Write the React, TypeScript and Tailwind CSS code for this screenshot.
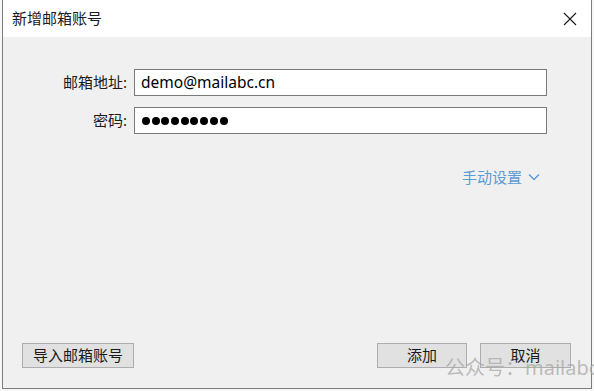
const FONT = { fontFamily: '"Noto Sans", "Noto Sans CJK SC", sans-serif' };

function PasswordDots({ count }: { count: number }) {
  return (
    <div className="ml-[1px] flex items-center gap-[1.7px]">
      {Array.from({ length: count }).map((_, i) => (
        <span key={i} className="block h-[8px] w-[8px] rounded-full bg-black" />
      ))}
    </div>
  );
}

function Field({ label, children }: { label: string; children: React.ReactNode }) {
  return (
    <div className="flex items-center">
      <div className="w-[125px] pr-[1px] text-right text-[15px] text-[#1a1a1a]">{label}</div>
      <div className="ml-[6px] flex h-[27px] w-[413px] items-center border border-[#7a7a7a] bg-white pl-[6px]">
        {children}
      </div>
    </div>
  );
}

export default function App() {
  return (
    <main className="relative h-[391px] w-[594px] overflow-hidden bg-[#f7f7f7]" style={FONT}>
      <div className="ml-[2px] flex h-[389px] w-[590px] flex-col border-x border-b border-[#7d7d7d] bg-[#f0f0f0]">
        <div className="flex h-[37px] items-center justify-between bg-white pl-[9px] pr-[14px]">
          <span className="text-[15px] text-[#1a1a1a]">新增邮箱账号</span>
          <svg width="14" height="14" viewBox="0 0 14 14" className="mt-[1px]">
            <path d="M1 1 L13 13 M13 1 L1 13" stroke="#1a1a1a" strokeWidth="1.1" fill="none" />
          </svg>
        </div>

        <div className="flex flex-1 flex-col">
          <div className="mt-[32px] flex flex-col gap-[11px]">
            <Field label="邮箱地址:">
              <span className="text-[15.5px] text-black">demo@mailabc.cn</span>
            </Field>
            <Field label="密码:">
              <PasswordDots count={9} />
            </Field>
          </div>

          <div className="mt-[32px] flex items-center justify-end gap-[6px] pr-[51px] text-[15px] text-[#5b9bd5]">
            <span>手动设置</span>
            <svg width="12" height="8" viewBox="0 0 12 8">
              <path d="M1 1.5 L6 6.5 L11 1.5" stroke="#5b9bd5" strokeWidth="1.5" fill="none" />
            </svg>
          </div>

          <div className="mt-auto mb-[20px] flex items-center justify-between pl-[19px] pr-[20px]">
            <button className="h-[25px] w-[112px] border border-[#adadad] bg-[#e1e1e1] text-[15px] text-[#1a1a1a]">
              导入邮箱账号
            </button>
            <div className="flex gap-[13px]">
              <button className="h-[25px] w-[90px] border border-[#adadad] bg-[#e1e1e1] text-[15px] text-[#1a1a1a]">
                添加
              </button>
              <button className="h-[25px] w-[91px] border border-[#adadad] bg-[#e1e1e1] text-[15px] text-[#1a1a1a]">
                取消
              </button>
            </div>
          </div>
        </div>
      </div>

      <div className="pointer-events-none absolute left-[445px] top-[353px] whitespace-nowrap text-[20px] text-[#a8a8a8]/75">
        公众号：mailabc
      </div>
    </main>
  );
}
